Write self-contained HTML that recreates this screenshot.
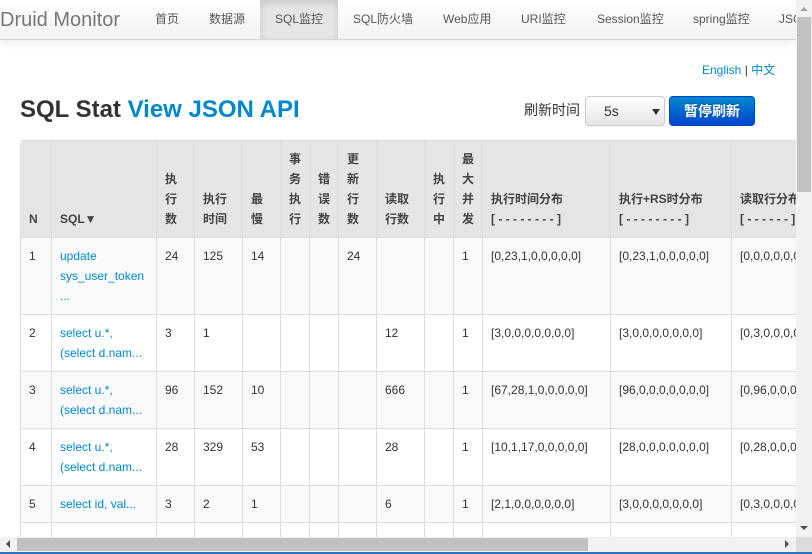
<!DOCTYPE html>
<html lang="zh">
<head>
<meta charset="utf-8">
<title>Druid Monitor</title>
<style>
html,body{margin:0;padding:0;width:812px;height:554px;overflow:hidden;background:#fff}
body{position:relative;font:12px/20px "Liberation Sans","Noto Sans CJK SC",sans-serif;color:#333}
a{color:#08c;text-decoration:none}
#view{position:absolute;left:0;top:0;width:796px;height:537px;overflow:hidden}
#nav{position:absolute;left:0;top:0;width:796px;height:39px;background:linear-gradient(#fff,#f2f2f2);border-bottom:1px solid #d4d4d4;box-shadow:0 1px 10px rgba(0,0,0,.1)}
#nav span{position:absolute;top:9px;color:#555;white-space:nowrap;height:20px}
#brand{position:absolute;left:0;top:0;line-height:40px;font-size:20px;color:#777;white-space:nowrap}
#act{position:absolute;left:260px;top:0;width:78px;height:39px;background:#e5e5e5;box-shadow:inset 0 3px 8px rgba(0,0,0,.125)}
#lang{position:absolute;left:702px;top:60px;white-space:nowrap;color:#333}
h1{position:absolute;left:20px;top:90px;margin:0;font-size:24px;line-height:40px;font-weight:bold;color:#333;white-space:nowrap}
#lbl{position:absolute;left:524px;top:100px;font-size:14px;white-space:nowrap}
#sel{position:absolute;left:585px;top:96px;width:78px;height:28px;border:1px solid #ccc;border-radius:4px;background:linear-gradient(#fff,#e6e6e6);box-shadow:0 1px 2px rgba(0,0,0,.05);font-size:14px;line-height:29px;color:#333;text-indent:18px}
#sel i{position:absolute;left:66px;top:12px;width:0;height:0;border-left:4px solid transparent;border-right:4px solid transparent;border-top:6px solid #333}
#btn{position:absolute;left:669px;top:96px;width:84px;height:28px;border:1px solid #04c;border-radius:4px;background:linear-gradient(#08c,#04c);color:#fff;font-size:14px;font-weight:bold;line-height:28px;text-align:center;text-shadow:0 -1px 0 rgba(0,0,0,.25)}
table{position:absolute;left:20px;top:140px;width:850px;table-layout:fixed;border-collapse:separate;border-spacing:0;border-top:1px solid #ddd;border-left:0}
th,td{box-sizing:border-box;border-left:1px solid #ddd;border-bottom:1px solid #ddd;padding:8px;text-align:left;vertical-align:top;line-height:20px;overflow:hidden;white-space:nowrap}
th{background:#e5e5e5;vertical-align:bottom;font-weight:bold;color:#444;height:97px;padding-top:7px}
tr:nth-child(odd) td{background:#f9f9f9}
tr:nth-child(even) td{background:#fff}
th:first-child{border-top-left-radius:4px}
.sb{position:absolute;background:#f1f1f1}
.th{position:absolute;background:#c1c1c1}
.ar{position:absolute;width:0;height:0}
</style>
</head>
<body>
<div id="view">
<div id="nav">
<div id="act"></div>
<div id="brand">Druid Monitor</div>
<span style="left:155px">首页</span>
<span style="left:209px">数据源</span>
<span style="left:275px">SQL监控</span>
<span style="left:353px">SQL防火墙</span>
<span style="left:443px">Web应用</span>
<span style="left:521px">URI监控</span>
<span style="left:597px">Session监控</span>
<span style="left:693px">spring监控</span>
<span style="left:779px">JSON API</span>
</div>
<div id="lang"><a href="#">English</a> | <a href="#">中文</a></div>
<h1>SQL Stat <a href="#">View JSON API</a></h1>
<div id="lbl">刷新时间</div>
<div id="sel">5s<i></i></div>
<div id="btn">暂停刷新</div>
<table>
<colgroup>
<col style="width:31px"><col style="width:105px"><col style="width:38px"><col style="width:48px"><col style="width:38px"><col style="width:29px"><col style="width:29px"><col style="width:38px"><col style="width:48px"><col style="width:29px"><col style="width:29px"><col style="width:128px"><col style="width:121px"><col style="width:139px">
</colgroup>
<thead>
<tr>
<th>N</th><th>SQL▼</th><th>执<br>行<br>数</th><th>执行<br>时间</th><th>最<br>慢</th><th>事<br>务<br>执<br>行</th><th>错<br>误<br>数</th><th>更<br>新<br>行<br>数</th><th>读取<br>行数</th><th>执<br>行<br>中</th><th>最<br>大<br>并<br>发</th><th>执行时间分布<br>[ - - - - - - - - ]</th><th>执行+RS时分布<br>[ - - - - - - - - ]</th><th>读取行分布<br>[ - - - - - - ]</th>
</tr>
</thead>
<tbody>
<tr><td>1</td><td><a href="#">update<br>sys_user_token<br>...</a></td><td>24</td><td>125</td><td>14</td><td></td><td></td><td>24</td><td></td><td></td><td>1</td><td>[0,23,1,0,0,0,0,0]</td><td>[0,23,1,0,0,0,0,0]</td><td>[0,0,0,0,0,0]</td></tr>
<tr><td>2</td><td><a href="#">select u.*,<br>(select d.nam...</a></td><td>3</td><td>1</td><td></td><td></td><td></td><td></td><td>12</td><td></td><td>1</td><td>[3,0,0,0,0,0,0,0]</td><td>[3,0,0,0,0,0,0,0]</td><td>[0,3,0,0,0,0]</td></tr>
<tr><td>3</td><td><a href="#">select u.*,<br>(select d.nam...</a></td><td>96</td><td>152</td><td>10</td><td></td><td></td><td></td><td>666</td><td></td><td>1</td><td>[67,28,1,0,0,0,0,0]</td><td>[96,0,0,0,0,0,0,0]</td><td>[0,96,0,0,0,0]</td></tr>
<tr><td>4</td><td><a href="#">select u.*,<br>(select d.nam...</a></td><td>28</td><td>329</td><td>53</td><td></td><td></td><td></td><td>28</td><td></td><td>1</td><td>[10,1,17,0,0,0,0,0]</td><td>[28,0,0,0,0,0,0,0]</td><td>[0,28,0,0,0,0]</td></tr>
<tr><td>5</td><td><a href="#">select id, val...</a></td><td>3</td><td>2</td><td>1</td><td></td><td></td><td></td><td>6</td><td></td><td>1</td><td>[2,1,0,0,0,0,0,0]</td><td>[3,0,0,0,0,0,0,0]</td><td>[0,3,0,0,0,0]</td></tr>
<tr><td>&nbsp;</td><td></td><td></td><td></td><td></td><td></td><td></td><td></td><td></td><td></td><td></td><td></td><td></td><td></td></tr>
</tbody>
</table>
</div>
<div class="sb" style="left:796px;top:0;width:16px;height:537px"></div>
<div class="th" style="left:797px;top:17px;width:14px;height:175px"></div>
<div class="ar" style="left:800px;top:7px;border-left:4px solid transparent;border-right:4px solid transparent;border-bottom:4px solid #a3a3a3"></div>
<div class="ar" style="left:800px;top:526px;border-left:4px solid transparent;border-right:4px solid transparent;border-top:4px solid #505050"></div>
<div class="sb" style="left:0;top:537px;width:796px;height:15px"></div>
<div class="th" style="left:17px;top:538px;width:571px;height:13px"></div>
<div class="ar" style="left:6px;top:540px;border-top:4px solid transparent;border-bottom:4px solid transparent;border-right:4px solid #505050"></div>
<div class="ar" style="left:785px;top:540px;border-top:4px solid transparent;border-bottom:4px solid transparent;border-left:4px solid #505050"></div>
<div style="position:absolute;left:796px;top:537px;width:16px;height:15px;background:#dcdcdc"></div>
<div style="position:absolute;left:0;top:552px;width:812px;height:2px;background:#2a74b8"></div>
</body>
</html>
